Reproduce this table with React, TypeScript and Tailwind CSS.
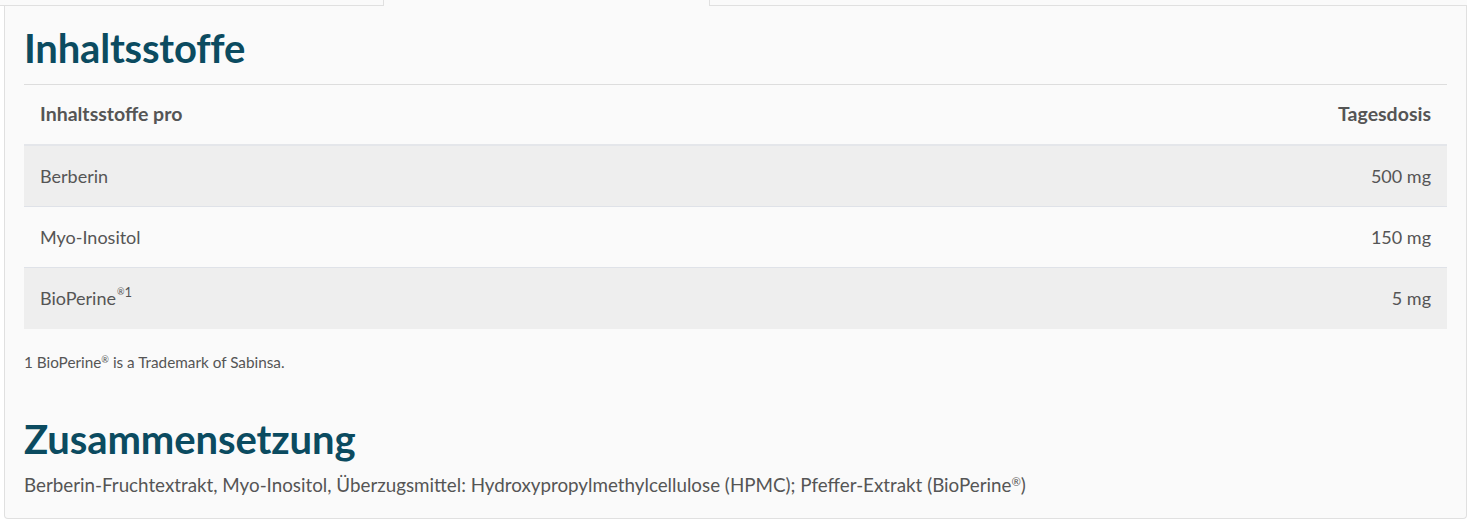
import React from "react";

const Reg = () => <sup className="text-[0.6em] top-[-0.55em]">®</sup>;

const rows = [
  { name: "Berberin", sup: false, dose: "500 mg" },
  { name: "Myo-Inositol", sup: false, dose: "150 mg" },
  { name: "BioPerine", sup: true, dose: "5 mg" },
];

export default function App() {
  return (
    <div
      className="w-[1471px] h-[523px] bg-white overflow-hidden text-[#555555]"
      style={{ fontFamily: "Lato, 'Liberation Sans', sans-serif" }}
    >
      <div className="flex h-[6px]">
        <div className="w-[384px] border-b border-r border-[#e0e0e0] bg-[#fafafa]" />
        <div className="w-[325px] bg-[#fafafa]" />
        <div className="w-[758px] border-b border-l border-[#e0e0e0] bg-[#fafafa]" />
      </div>
      <div className="ml-[4px] w-[1463px] h-[513px] flex flex-col border-l border-r border-b border-[#e0e0e0] rounded-bl-[4px] rounded-br-[4px] bg-[#fafafa] px-[19px]">
        <h2 className="pt-[22px] mb-[16px] text-[40px] leading-[40px] font-bold text-[#0b4b60] tracking-[-0.2px]">
          Inhaltsstoffe
        </h2>
        <div className="flex flex-col border-t border-[#dddddd]">
          <div className="flex justify-between items-center h-[61px] pb-[2px] px-[16px] border-b-2 border-[#e4e6ea] text-[19.5px] font-bold">
            <span>Inhaltsstoffe pro</span>
            <span>Tagesdosis</span>
          </div>
          {rows.map((r, i) => (
            <div
              key={r.name}
              className={`flex justify-between items-center h-[61px] px-[16px] text-[18px] ${
                i % 2 === 0 ? "bg-[#eeeeee]" : "bg-[#fafafa]"
              } ${i < rows.length - 1 ? "border-b border-[#dfe2e8]" : ""}`}
            >
              <span>
                {r.name}
                {r.sup && (
                  <sup className="ml-[1px] text-[13px] top-[-0.6em]">
                    <span className="text-[9px] align-[2px]">®</span>1
                  </sup>
                )}
              </span>
              <span>{r.dose}</span>
            </div>
          ))}
        </div>
        <p className="mt-[23px] text-[15.3px] leading-[20px]">
          1 BioPerine<Reg /> is a Trademark of Sabinsa.
        </p>
        <h2 className="mt-[47px] text-[40px] leading-[40px] font-bold text-[#0b4b60] tracking-[-0.1px]">
          Zusammensetzung
        </h2>
        <p className="mt-[13px] text-[18.8px] leading-[26px]">
          Berberin-Fruchtextrakt, Myo-Inositol, Überzugsmittel: Hydroxypropylmethylcellulose (HPMC); Pfeffer-Extrakt (BioPerine<Reg />)
        </p>
      </div>
    </div>
  );
}
